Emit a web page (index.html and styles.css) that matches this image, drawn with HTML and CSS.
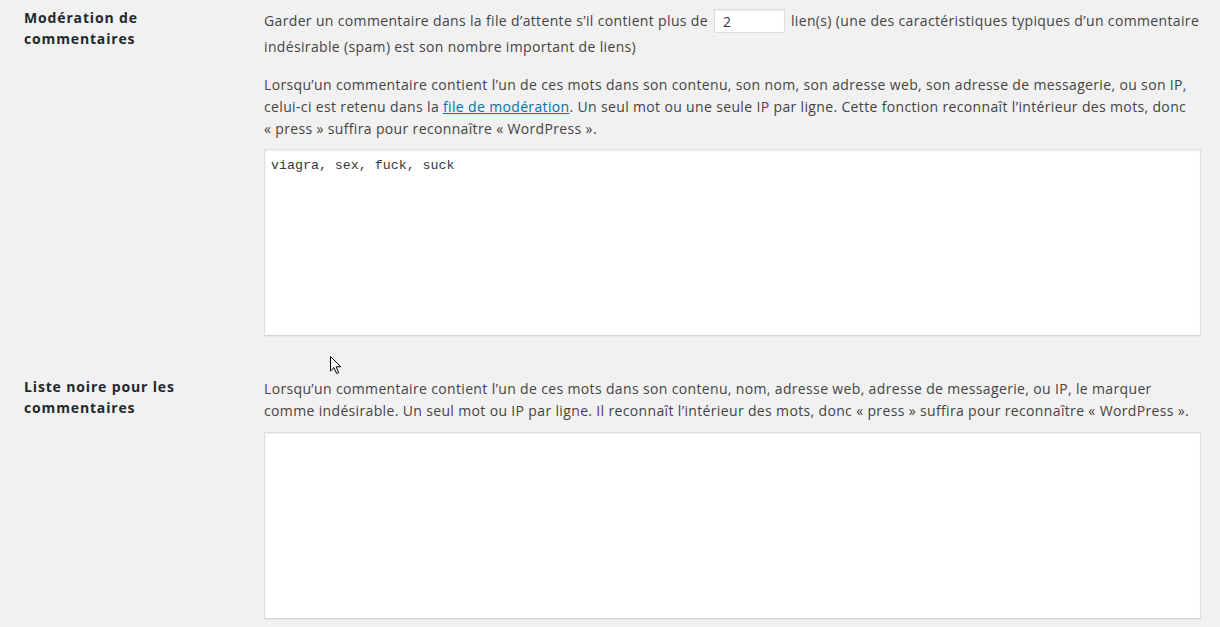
FILE: index.html
```html
<!DOCTYPE html>
<html lang="fr">
<head>
<meta charset="utf-8">
<title>Réglages des discussions</title>
<link rel="stylesheet" href="styles.css">
</head>
<body>
<div class="wrap">
  <div class="row row-first">
    <div class="th">Modération de commentaires</div>
    <div class="td">
      <p class="p-links">Garder un commentaire dans la file d’attente s’il contient plus de <input class="small-text" type="text" value="2"> lien(s) (une des caractéristiques typiques d’un commentaire indésirable (spam) est son nombre important de liens)</p>
      <p class="desc">Lorsqu’un commentaire contient l’un de ces mots dans son contenu, son nom, son adresse web, son adresse de messagerie, ou son IP, celui-ci est retenu dans la <a href="#">file de modération</a>. Un seul mot ou une seule IP par ligne. Cette fonction reconnaît l’intérieur des mots, donc «&nbsp;press&nbsp;» suffira pour reconnaître «&nbsp;WordPress&nbsp;».</p>
      <textarea class="code code-first">viagra, sex, fuck, suck</textarea>
    </div>
  </div>
  <div class="row row-second">
    <div class="th">Liste noire pour les commentaires</div>
    <div class="td">
      <p class="desc">Lorsqu’un commentaire contient l’un de ces mots dans son contenu, nom, adresse web, adresse de messagerie, ou IP, le marquer comme indésirable. Un seul mot ou IP par ligne. Il reconnaît l’intérieur des mots, donc «&nbsp;press&nbsp;» suffira pour reconnaître «&nbsp;WordPress&nbsp;».</p>
      <textarea class="code"></textarea>
    </div>
  </div>
  <svg class="cursor" width="13" height="20" viewBox="0 0 13 20"><path d="M1.5 1.5 L1.5 16 L5 12.6 L7.6 18.5 L9.6 17.6 L7.1 11.8 L11.8 11.8 Z" fill="#fff" stroke="#000" stroke-width="1" stroke-linejoin="miter"/></svg>
</div>
</body>
</html>
```

FILE: styles.css
```css
html, body {
  margin: 0;
  padding: 0;
  background: #f1f1f1;
}
body {
  font-family: "Open Sans", "Noto Sans", sans-serif;
  font-size: 14px;
  color: #444;
}
.wrap {
  position: relative;
  padding: 0 19px 0 24px;
  height: 627px;
  overflow: hidden;
}
.row {
  display: flex;
  align-items: flex-start;
}
.row-second {
  margin-top: 40px;
}
.th {
  width: 180px;
  flex: 0 0 180px;
  margin-right: 60px;
  font-weight: 700;
  font-size: 14px;
  letter-spacing: 0.85px;
  line-height: 21px;
  color: #23282d;
  padding-top: 7px;
}
.row-second .th {
  padding-top: 0;
}
.td {
  flex: 1;
  min-width: 0;
  padding-top: 8px;
}
.row-second .td {
  padding-top: 2px;
}
p {
  margin: 0;
  font-size: 14px;
  letter-spacing: 0.35px;
  line-height: 22px;
}
.p-links {
  line-height: 26px;
}
.desc {
  margin-top: 14px;
}
.row-second .desc {
  margin-top: 0;
}
a {
  color: #0073aa;
  text-decoration: underline;
}
.small-text {
  box-sizing: border-box;
  width: 71px;
  height: 24px;
  margin: 0 2px 0 2px;
  padding: 0 8px;
  border: 1px solid #ddd;
  box-shadow: inset 0 1px 2px rgba(0,0,0,.07);
  background: #fff;
  font-family: "Open Sans", sans-serif;
  font-size: 14px;
  color: #32373c;
  vertical-align: middle;
  position: relative;
  top: -1px;
}
textarea.code {
  display: block;
  box-sizing: border-box;
  width: 937px;
  height: 187px;
  margin-top: 10px;
  padding: 7px 6px 6px;
  border: 1px solid #ddd;
  border-bottom-color: #d4d4d4;
  box-shadow: inset 0 1px 2px rgba(0,0,0,.07), 0 1px 0 rgba(0,0,0,.04);
  background: #fff;
  font-family: "Liberation Mono", "DejaVu Sans Mono", monospace;
  font-size: 13.3px;
  line-height: 18px;
  color: #32373c;
  resize: none;
}
textarea.code-first {
  margin-top: 9px;
}
.cursor {
  position: absolute;
  left: 329px;
  top: 355px;
}
```
